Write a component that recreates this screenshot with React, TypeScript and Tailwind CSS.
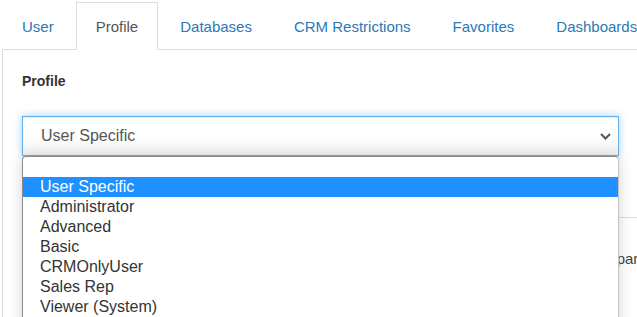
import { useState } from "react";

const tabs = ["User", "Profile", "Databases", "CRM Restrictions", "Favorites", "Dashboards"];

const options = [
  "",
  "User Specific",
  "Administrator",
  "Advanced",
  "Basic",
  "CRMOnlyUser",
  "Sales Rep",
  "Viewer (System)",
];

export default function App() {
  const [active] = useState("Profile");
  const [selected] = useState("User Specific");

  return (
    <div
      className="relative w-[637px] h-[317px] overflow-hidden bg-white pl-[2px]"
      style={{ fontFamily: '"Liberation Sans", Arial, sans-serif' }}
    >
      {/* tab strip */}
      <ul className="flex pt-[2px] border-b border-[#dddddd] whitespace-nowrap">
        {tabs.map((t) => (
          <li
            key={t}
            className={`-mb-px mr-[2px] flex h-[48px] items-center border px-[19px] pt-[2px] text-[15px] ${
              t === active
                ? "border-[#dddddd] border-b-white bg-white text-[#555555]"
                : "border-transparent text-[#2a79b8]"
            }`}
          >
            {t}
          </li>
        ))}
      </ul>

      {/* tab content */}
      <div className="h-[300px] border-l border-[#dddddd] pl-[19px] pt-[21px]">
        <label className="block text-[14px] font-bold leading-[20px] text-[#333333]">
          Profile
        </label>

        <div className="relative mt-[25px] w-[597px]">
          <div className="flex h-[40px] items-center border border-[#66afe9] bg-gradient-to-b from-white from-50% to-[#efefef] pl-[18px] text-[16px] text-[#555555] shadow-[inset_0_1px_1px_rgba(0,0,0,0.075),0_0_8px_rgba(102,175,233,0.6)]">
            {selected}
          </div>
          <svg
            className="absolute right-[8px] top-[17px]"
            width="11"
            height="7"
            viewBox="0 0 11 7"
            fill="none"
          >
            <path d="M1 1l4.5 4.5L10 1" stroke="#555555" strokeWidth="2" />
          </svg>
        </div>

        {/* section sitting behind the open list */}
        <div className="mt-[61px] ml-[563px] w-[120px] border-t border-[#dddddd] pt-[30px]">
          <p className="text-[15px] text-[#444444]">Compare</p>
        </div>
      </div>

      {/* native select popup */}
      <ul className="absolute left-[22px] top-[156px] w-[597px] overflow-hidden rounded-t-[4px] border border-[#8a8a8a] border-r-[#c4c4c4] bg-white pb-4 shadow-[0_2px_14px_rgba(0,0,0,0.18)]">
        {options.map((o, i) => (
          <li
            key={i}
            className={`h-[20px] pl-[17px] text-[16px] leading-[20px] ${
              o === selected ? "bg-[#1e90ff] text-white" : "text-[#333333]"
            }`}
          >
            {o}
          </li>
        ))}
      </ul>
    </div>
  );
}
